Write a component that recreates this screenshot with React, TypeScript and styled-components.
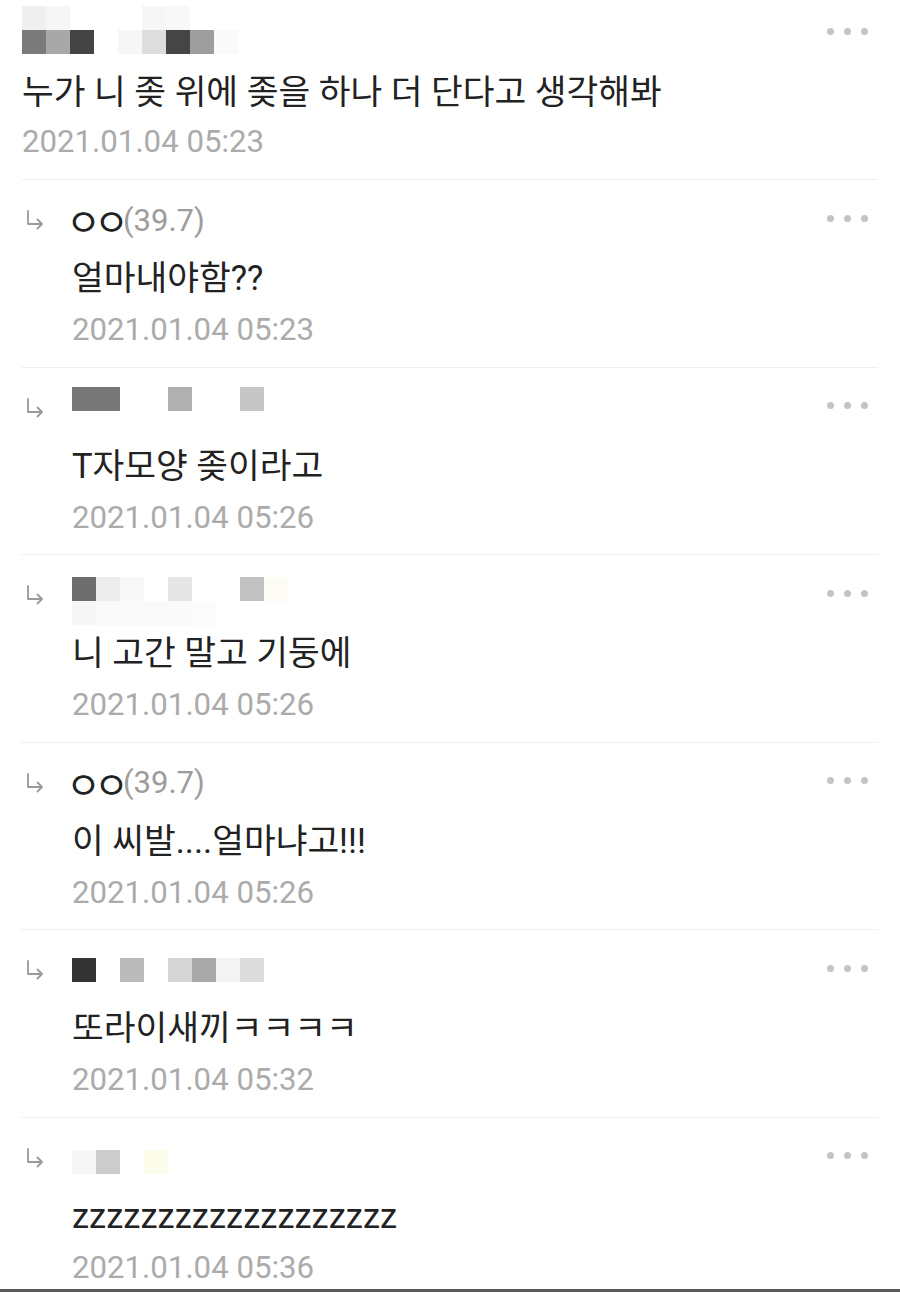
import styled, { createGlobalStyle } from "styled-components";

const GlobalStyle = createGlobalStyle`
  html, body {
    margin: 0;
    padding: 0;
    background: #ffffff;
  }
  body {
    font-family: Roboto, "Noto Sans CJK KR", sans-serif;
    -webkit-font-smoothing: antialiased;
  }
`;

type Tone = string | null;

interface reply {
  nick?: string;
  score?: string;
  mosaic?: Tone[][];
  mosaicTop?: number;
  text: string;
  date: string;
}

const Page = styled.div`
  height: 1292px;
  display: flex;
  flex-direction: column;
  overflow: hidden;
  background: #ffffff;
`;

const List = styled.div`
  flex: 1;
  overflow: hidden;
  padding: 0 22px;
`;

const BottomBar = styled.div`
  height: 3px;
  background: #5a5a5a;
`;

const TopComment = styled.div`
  padding: 17px 0 12px;
`;

const ReplyRow = styled.div`
  display: flex;
  border-top: 1px solid #efefef;
  padding: 15px 0 11.6px;
`;

const ArrowCol = styled.div`
  width: 50px;
  height: 50px;
  flex-shrink: 0;
  display: flex;
  align-items: center;
  padding-left: 4px;
  box-sizing: border-box;
`;

const Body = styled.div`
  flex: 1;
  min-width: 0;
`;

const Header = styled.div`
  display: flex;
  height: 50px;
`;

const NameArea = styled.div`
  flex: 1;
  display: flex;
  align-items: center;
`;

const Nick = styled.span`
  font-family: "Noto Sans CJK KR", sans-serif;
  font-size: 38px;
  line-height: 50px;
  letter-spacing: -7px;
  margin-left: -6px;
  margin-right: 1px;
  color: #222222;
`;

const Score = styled.span`
  font-family: Roboto, sans-serif;
  font-size: 31px;
  color: #9c9c9c;
`;

const MosaicGrid = styled.div<{ $top: number; $cols: number }>`
  align-self: flex-start;
  margin-top: ${(p) => p.$top}px;
  display: grid;
  grid-template-columns: repeat(${(p) => p.$cols}, 24px);
  grid-auto-rows: 24px;
`;

const Cell = styled.div<{ $tone: Tone }>`
  background: ${(p) => p.$tone || "transparent"};
`;

const Dots = styled.div<{ $top: number }>`
  align-self: flex-start;
  margin-top: ${(p) => p.$top}px;
  margin-right: 10px;
  display: flex;
  gap: 10px;
`;

const Dot = styled.span`
  width: 7px;
  height: 7px;
  border-radius: 50%;
  background: #c4c4c4;
`;

const Content = styled.div<{ $gap: number }>`
  margin-top: ${(p) => p.$gap}px;
  height: 50px;
  line-height: 50px;
  font-size: 34.5px;
  color: #222222;
  white-space: nowrap;
`;

const DateText = styled.div<{ $gap: number }>`
  margin-top: ${(p) => p.$gap}px;
  height: 50px;
  line-height: 50px;
  font-family: Roboto, sans-serif;
  font-size: 31.2px;
  color: #ababab;
`;

const ReplyArrow = () => (
  <svg width="19" height="20" viewBox="0 0 19 20" fill="none">
    <path
      d="M2 1 V14 H16 M11.5 9.5 L16 14 L11.5 18.5"
      stroke="#9a9a9a"
      strokeWidth="1.8"
      strokeLinecap="round"
      strokeLinejoin="round"
    />
  </svg>
);

const Mosaic = ({ rows, top }: { rows: Tone[][]; top: number }) => {
  const cols = Math.max(...rows.map((r) => r.length));
  return (
    <MosaicGrid $top={top} $cols={cols}>
      {rows.map((r, i) =>
        Array.from({ length: cols }).map((_, j) => (
          <Cell key={i + "-" + j} $tone={r[j] ?? null} />
        ))
      )}
    </MosaicGrid>
  );
};

const MoreDots = ({ top }: { top: number }) => (
  <Dots $top={top}>
    <Dot />
    <Dot />
    <Dot />
  </Dots>
);

const topMosaic: Tone[][] = [
  ["#efefef", "#f6f6f6", null, null, null, "#f6f6f6", "#f8f8f8", null, null],
  ["#7a7a7a", "#a8a8a8", "#444444", null, "#f6f6f6", "#dddddd", "#454545", "#9e9e9e", "#fafafa"],
];

const replies: reply[] = [
  { nick: "ㅇㅇ", score: "(39.7)", text: "얼마내야함??", date: "2021.01.04 05:23" },
  {
    mosaic: [["#777777", "#777777", null, null, "#b0b0b0", null, null, "#c6c6c6"]],
    mosaicTop: 4,
    text: "T자모양 좆이라고",
    date: "2021.01.04 05:26",
  },
  {
    mosaic: [
      ["#6e6e6e", "#ececec", "#f8f8f8", null, "#e6e6e6", null, null, "#c2c2c2", "#fcfcf4"],
      ["#f7f7f7", "#fafafa", "#fafafa", "#fafafa", "#fafafa", "#fbfbfb", null, null, null],
    ],
    mosaicTop: 7,
    text: "니 고간 말고 기둥에",
    date: "2021.01.04 05:26",
  },
  { nick: "ㅇㅇ", score: "(39.7)", text: "이 씨발....얼마냐고!!!", date: "2021.01.04 05:26" },
  {
    mosaic: [["#333333", null, "#bbbbbb", null, "#d6d6d6", "#a9a9a9", "#f4f4f4", "#dcdcdc"]],
    mosaicTop: 13,
    text: "또라이새끼ㅋㅋㅋㅋ",
    date: "2021.01.04 05:32",
  },
  {
    mosaic: [["#f6f6f6", "#cccccc", null, "#fcfcea"]],
    mosaicTop: 17,
    text: "zzzzzzzzzzzzzzzzzzz",
    date: "2021.01.04 05:36",
  },
];

const Reply = ({ item }: { item: reply }) => (
  <ReplyRow>
    <ArrowCol>
      <ReplyArrow />
    </ArrowCol>
    <Body>
      <Header>
        <NameArea>
          {item.mosaic ? (
            <Mosaic rows={item.mosaic} top={item.mosaicTop ?? 0} />
          ) : (
            <>
              <Nick>{item.nick}</Nick>
              <Score>{item.score}</Score>
            </>
          )}
        </NameArea>
        <MoreDots top={19.5} />
      </Header>
      <Content $gap={8}>{item.text}</Content>
      <DateText $gap={2}>{item.date}</DateText>
    </Body>
  </ReplyRow>
);

export default function App() {
  return (
    <>
      <GlobalStyle />
      <Page>
        <List>
          <TopComment>
            <Header>
              <NameArea>
                <Mosaic rows={topMosaic} top={-11} />
              </NameArea>
              <MoreDots top={10.5} />
            </Header>
            <Content $gap={0}>누가 니 좆 위에 좆을 하나 더 단다고 생각해봐</Content>
            <DateText $gap={0}>2021.01.04 05:23</DateText>
          </TopComment>
          {replies.map((r, i) => (
            <Reply key={i} item={r} />
          ))}
        </List>
        <BottomBar />
      </Page>
    </>
  );
}
